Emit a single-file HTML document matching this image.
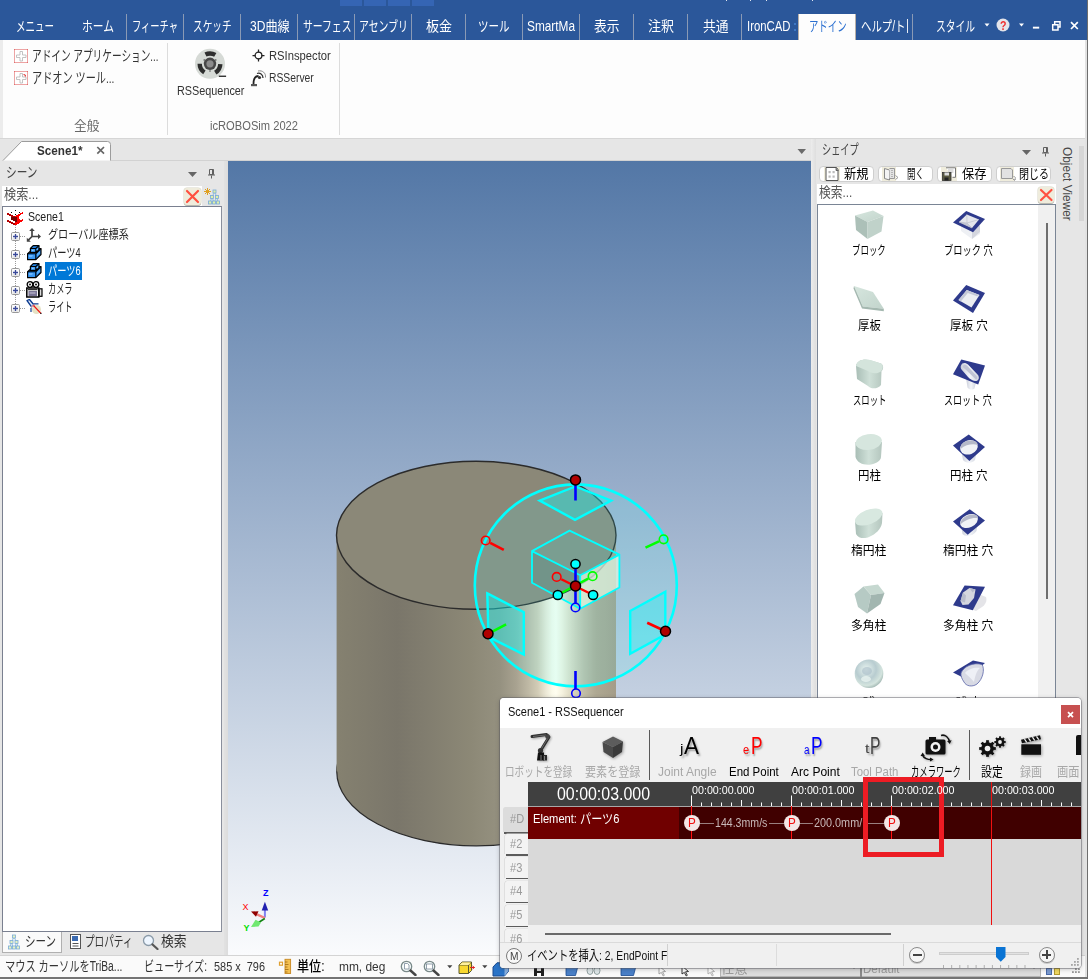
<!DOCTYPE html>
<html lang="ja"><head><meta charset="utf-8"><title>IronCAD - RSSequencer</title>
<style>
html,body{margin:0;padding:0;background:#e8e8e8;}
body{width:1088px;height:979px;overflow:hidden;font-family:"Liberation Sans","Noto Sans CJK JP",sans-serif;}
#root{position:relative;width:1088px;height:979px;overflow:hidden;background:#e8e8e8;}
#root div,#root svg{position:absolute;box-sizing:border-box;}
.t{position:absolute;white-space:pre;transform-origin:0 50%;display:block;}
#seq{left:500px;top:698px;width:581px;height:270px;background:#f0f0f0;border-radius:4px;overflow:hidden;box-shadow:0 0 0 1px rgba(90,90,100,.45),0 1px 5px rgba(0,0,0,.25);}

</style></head>
<body>
<div id="root">
<div style="left:0px;top:0px;width:1088px;height:40px;background:#2b579a;"></div>
<div style="left:340px;top:0px;width:22px;height:5.6px;background:#3565b4;"></div>
<div style="left:364px;top:0px;width:22px;height:5.6px;background:#3565b4;"></div>
<div style="left:388px;top:0px;width:22px;height:5.6px;background:#3565b4;"></div>
<div style="left:412px;top:0px;width:22px;height:5.6px;background:#3565b4;"></div>
<div style="left:126px;top:14px;width:1px;height:26px;background:#8a9ab5;"></div>
<div style="left:183px;top:14px;width:1px;height:26px;background:#8a9ab5;"></div>
<div style="left:240px;top:14px;width:1px;height:26px;background:#8a9ab5;"></div>
<div style="left:297px;top:14px;width:1px;height:26px;background:#8a9ab5;"></div>
<div style="left:354px;top:14px;width:1px;height:26px;background:#8a9ab5;"></div>
<div style="left:411px;top:14px;width:1px;height:26px;background:#8a9ab5;"></div>
<div style="left:465px;top:14px;width:1px;height:26px;background:#8a9ab5;"></div>
<div style="left:522px;top:14px;width:1px;height:26px;background:#8a9ab5;"></div>
<div style="left:579px;top:14px;width:1px;height:26px;background:#8a9ab5;"></div>
<div style="left:633px;top:14px;width:1px;height:26px;background:#8a9ab5;"></div>
<div style="left:687px;top:14px;width:1px;height:26px;background:#8a9ab5;"></div>
<div style="left:741px;top:14px;width:1px;height:26px;background:#8a9ab5;"></div>
<div style="left:912px;top:14px;width:1px;height:26px;background:#8a9ab5;"></div>
<div style="left:798px;top:14px;width:57.5px;height:27px;background:#fdfdfd;box-shadow:inset 1px 0 0 #b8b0a8, inset -1px 0 0 #b8b0a8;"></div>
<div style="left:907px;top:19px;width:1px;height:14px;background:#e8ecf4;"></div>
<div style="left:794px;top:23px;width:1.5px;height:2px;background:#3f78c4;"></div>
<div style="left:794px;top:29px;width:1.5px;height:2px;background:#3f78c4;"></div>
<div style="left:726px;top:0px;width:1px;height:1px;background:#dfe6f2;"></div>
<div style="left:750px;top:0px;width:1px;height:1px;background:#dfe6f2;"></div>
<div style="left:766px;top:0px;width:1px;height:1px;background:#dfe6f2;"></div>
<div style="left:812px;top:0px;width:1px;height:1px;background:#dfe6f2;"></div>
<svg style="left:980px;top:14px" width="108" height="24" viewBox="0 0 108 24"><path d="M4.5 9.5h5l-2.5 3z" fill="#fff"/><circle cx="23" cy="11" r="6.5" fill="#e4e4ea"/><path d="M39 9.5h5l-2.5 3z" fill="#fff"/><rect x="52.900" y="12.700" width="6.300" height="1.900" fill="#fff"/><path d="M72.700 10.700h5.300v5.300h-5.300zM74.700 10.500v-2.800h5.300v5.300h-2" fill="none" stroke="#fff" stroke-width="1.500"/><path d="M91 8.200l6.800 6.800M97.800 8.200l-6.800 6.800" stroke="#fff" stroke-width="1.700"/></svg>
<div style="left:0px;top:40px;width:1088px;height:98px;background:#fdfdfd;"></div>
<div style="left:0px;top:40px;width:3px;height:98px;background:#ececec;"></div>
<div style="left:0px;top:138px;width:1088px;height:1px;background:#d6d6d6;"></div>
<div style="left:167px;top:43px;width:1px;height:92px;background:#dcdcdc;"></div>
<div style="left:339px;top:43px;width:1px;height:92px;background:#dcdcdc;"></div>
<svg style="left:14px;top:49px" width="14" height="14" viewBox="0 0 14 14"><rect x=".5" y=".5" width="13" height="13" fill="#fff" stroke="#eda4a4"/><g fill="#e07070"><rect x="0" y="0" width="1" height="1"/><rect x="13" y="0" width="1" height="1"/><rect x="0" y="13" width="1" height="1"/><rect x="13" y="13" width="1" height="1"/></g><path d="M6 2.500h2.500v3.500h3.500v2.500h-3.500v3.500h-2.500v-3.500h-3.500v-2.500h3.500z" fill="#fff" stroke="#b4b4b4" stroke-width=".8"/></svg>
<svg style="left:14px;top:71px" width="14" height="14" viewBox="0 0 14 14"><rect x=".5" y=".5" width="13" height="13" fill="#fff" stroke="#eda4a4"/><g fill="#e07070"><rect x="0" y="0" width="1" height="1"/><rect x="13" y="0" width="1" height="1"/><rect x="0" y="13" width="1" height="1"/><rect x="13" y="13" width="1" height="1"/></g><path d="M6 2.500h2.500v3.500h3.500v2.500h-3.500v3.500h-2.500v-3.500h-3.500v-2.500h3.500z" fill="#fff" stroke="#b4b4b4" stroke-width=".8"/><path d="M9.5 3.500a2 2 0 0 1 2 2" stroke="#e03030" fill="none" stroke-width="1.200"/></svg>
<svg style="left:194px;top:48px" width="34" height="32" viewBox="0 0 34 32">
<circle cx="16" cy="15.800" r="15" fill="#d6dad6"/>
<circle cx="16" cy="15.800" r="10.300" fill="none" stroke="#2e2e2e" stroke-width="4.400" stroke-dasharray="10.200 11.370" stroke-dashoffset="-0.400"/>
<circle cx="16" cy="15.800" r="6.200" fill="#484848"/><circle cx="16" cy="15.800" r="3.600" fill="#8c8c8c"/>
<g fill="#333"><circle cx="10.200" cy="12" r=".7"/><circle cx="21.800" cy="12" r=".7"/><circle cx="16" cy="23" r=".7"/></g>
<rect x="24.800" y="27.600" width="7.300" height="1.300" fill="#222"/>
</svg>
<svg style="left:251px;top:48px" width="15" height="15" viewBox="0 0 15 15">
<circle cx="7.500" cy="7.500" r="3.400" fill="none" stroke="#222" stroke-width="1.300"/>
<path d="M7.500 1.500v3M7.500 10.500v3M1.500 7.500h3M10.500 7.500h3" stroke="#222" stroke-width="1.250"/></svg>
<svg style="left:250px;top:70px" width="16" height="17" viewBox="0 0 16 17">
<path d="M3.500 14c0-5 1.500-8 5-8" fill="none" stroke="#222" stroke-width="1.800"/>
<path d="M7 3.500c3-1 6 1 6 4.500" fill="none" stroke="#333" stroke-width="1.300"/>
<path d="M8 1c4.500-1 8 2 7.500 6.500" fill="none" stroke="#888" stroke-width="1"/>
<circle cx="9.500" cy="7.500" r="1.600" fill="#333"/>
<rect x="1" y="14" width="6" height="2.200" fill="#555"/></svg>
<div style="left:0px;top:139px;width:1088px;height:22px;background:#e6e6e6;"></div>
<div style="left:110px;top:160px;width:701px;height:1px;background:#d2d2d2;"></div>
<svg style="left:0;top:139px" width="116" height="23" viewBox="0 0 116 23">
<path d="M3 21.500L21.500 2.500H107.500Q110.500 2.500 110.500 5.500V21.500" fill="#fff" stroke="#9c9c9c" stroke-width="1"/>
<path d="M97.300 8l6.700 6.700M104 8l-6.700 6.700" stroke="#666" stroke-width="1.700"/>
</svg>
<svg style="left:796px;top:147px" width="12" height="8"><path d="M1.500 2h8.500l-4.250 5z" fill="#6a6a6a"/></svg>
<div style="left:0px;top:161px;width:228px;height:794px;background:#e6e6e6;"></div>
<div style="left:224px;top:161px;width:4px;height:794px;background:linear-gradient(90deg,#e2e2e2,#dcdcdc);"></div>
<svg style="left:186px;top:168px" width="32" height="12"><path d="M2 4h9l-4.500 5z" fill="#666"/><path d="M23.500 1.500h4v5h-4zM22 7h7M25.500 7.500v3" fill="none" stroke="#606060" stroke-width="1"/><rect x="26" y="1.500" width="1.500" height="5" fill="#606060"/></svg>
<div style="left:2px;top:186px;width:200px;height:20px;background:#fff;"></div>
<div style="left:183.5px;top:187.5px;width:17px;height:17px;background:#efecdc;border-radius:3px;box-shadow:0 1px 0 #b8b8b0, 0 0 0 .5px #d8d6c8;"></div><svg style="left:183.5px;top:187.5px" width="17" height="17" viewBox="0 0 17 17"><path d="M3 3L14 14M14 3L3 14" stroke="#ff5040" stroke-width="2.200" stroke-linecap="round"/></svg>
<svg style="left:203px;top:187px" width="18" height="18" viewBox="0 0 18 18">
<path d="M4.500 1v7M1 4.500h7M2 2l5 5M7 2l-5 5" stroke="#e0a020" stroke-width="1"/>
<path d="M11.500 5L9 10M11.500 5l2.500 5M9 10l-2 5.500M9 10l2 5.500M14 10l1 5.500M14 10l-3 5.500" stroke="#8ab8e0" stroke-width=".9" fill="none"/>
<g fill="#dff0a8" stroke="#78aad8" stroke-width=".8"><rect x="10" y="3" width="3" height="3"/><rect x="7.500" y="8.500" width="3" height="3"/><rect x="12.500" y="8.500" width="3" height="3"/><rect x="5.500" y="14" width="3" height="3"/><rect x="9.500" y="14" width="3" height="3"/><rect x="13.500" y="14" width="3" height="3"/></g></svg>
<div style="left:2px;top:206px;width:220px;height:726px;background:#fff;border:1px solid #7a8090;border-right-color:#8a8f9c;border-bottom-color:#7a8090;"></div>
<div style="left:45px;top:262px;width:37px;height:18px;background:#0078d7;"></div>
<svg style="left:0;top:206px" width="46" height="112" viewBox="0 0 46 112"><path d="M15.500 19V102" stroke="#9a9a9a" stroke-width="1" stroke-dasharray="1 1"/><path d="M20 30.5H26" stroke="#9a9a9a" stroke-dasharray="1 1"/><rect x="11.500" y="26.5" width="8" height="8" rx="1.200" fill="#fcfcfc" stroke="#999"/><rect x="12.500" y="32.0" width="6" height="2" fill="#e8e8e8"/><path d="M13 30.5h5M15.500 28.0v5" stroke="#3a4a9a" stroke-width="1.300"/><path d="M20 48.5H26" stroke="#9a9a9a" stroke-dasharray="1 1"/><rect x="11.500" y="44.5" width="8" height="8" rx="1.200" fill="#fcfcfc" stroke="#999"/><rect x="12.500" y="50.0" width="6" height="2" fill="#e8e8e8"/><path d="M13 48.5h5M15.500 46.0v5" stroke="#3a4a9a" stroke-width="1.300"/><path d="M20 66.5H26" stroke="#9a9a9a" stroke-dasharray="1 1"/><rect x="11.500" y="62.5" width="8" height="8" rx="1.200" fill="#fcfcfc" stroke="#999"/><rect x="12.500" y="68.0" width="6" height="2" fill="#e8e8e8"/><path d="M13 66.5h5M15.500 64.0v5" stroke="#3a4a9a" stroke-width="1.300"/><path d="M20 84.5H26" stroke="#9a9a9a" stroke-dasharray="1 1"/><rect x="11.500" y="80.5" width="8" height="8" rx="1.200" fill="#fcfcfc" stroke="#999"/><rect x="12.500" y="86.0" width="6" height="2" fill="#e8e8e8"/><path d="M13 84.5h5M15.500 82.0v5" stroke="#3a4a9a" stroke-width="1.300"/><path d="M20 102.5H26" stroke="#9a9a9a" stroke-dasharray="1 1"/><rect x="11.500" y="98.5" width="8" height="8" rx="1.200" fill="#fcfcfc" stroke="#999"/><rect x="12.500" y="104.0" width="6" height="2" fill="#e8e8e8"/><path d="M13 102.5h5M15.500 100.0v5" stroke="#3a4a9a" stroke-width="1.300"/></svg>
<svg style="left:4px;top:207px" width="20" height="18" viewBox="0 0 20 18" shape-rendering="crispEdges"><rect x="11" y="3" width="1" height="1" fill="#000"/><rect x="7" y="5" width="1" height="1" fill="#000"/><rect x="15" y="5" width="1" height="1" fill="#000"/><rect x="18" y="5" width="1" height="1" fill="#ff0000"/><rect x="3" y="6" width="2" height="1" fill="#b40000"/><rect x="16" y="6" width="3" height="1" fill="#ff0000"/><rect x="3" y="7" width="4" height="1" fill="#b40000"/><rect x="11" y="7" width="1" height="1" fill="#000"/><rect x="14" y="7" width="3" height="1" fill="#ff0000"/><rect x="5" y="8" width="4" height="1" fill="#b40000"/><rect x="12" y="8" width="4" height="1" fill="#ff0000"/><rect x="7" y="9" width="4" height="1" fill="#b40000"/><rect x="11" y="9" width="4" height="1" fill="#ff0000"/><rect x="7" y="10" width="6" height="1" fill="#720000"/><rect x="13" y="10" width="2" height="1" fill="#ff0000"/><rect x="7" y="11" width="6" height="1" fill="#720000"/><rect x="13" y="11" width="2" height="1" fill="#ff0000"/><rect x="7" y="12" width="6" height="1" fill="#720000"/><rect x="13" y="12" width="3" height="1" fill="#ff0000"/><rect x="18" y="12" width="1" height="1" fill="#ff0000"/><rect x="3" y="13" width="2" height="1" fill="#b40000"/><rect x="9" y="13" width="4" height="1" fill="#720000"/><rect x="13" y="13" width="6" height="1" fill="#ff0000"/><rect x="3" y="14" width="4" height="1" fill="#b40000"/><rect x="11" y="14" width="2" height="1" fill="#720000"/><rect x="13" y="14" width="5" height="1" fill="#ff0000"/><rect x="5" y="15" width="4" height="1" fill="#b40000"/><rect x="11" y="15" width="5" height="1" fill="#ff0000"/><rect x="7" y="16" width="4" height="1" fill="#b40000"/><rect x="11" y="16" width="4" height="1" fill="#ff0000"/><rect x="9" y="17" width="2" height="1" fill="#b40000"/><rect x="11" y="17" width="2" height="1" fill="#ff0000"/></svg>
<svg style="left:26px;top:227px" width="16" height="16" viewBox="0 0 16 16">
<path d="M6 9.500V2.500M6 9.500H13.500M6 9.500L1.800 13.700" stroke="#444" stroke-width="1.700" fill="none"/>
<path d="M3.200 4L6 1l2.800 3zM12 6.700l3 2.800-3 2.800zM.8 10.800v4h4z" fill="#444"/></svg>
<svg style="left:27px;top:244.5px" width="15" height="16" viewBox="0 0 15 16">
<path d="M.6 8.800L3.400 6.300V3.500L6.200.6H12V3.700L14 3.500V9.500L8.800 14.700H.6Z" fill="#2384e6" stroke="#000" stroke-width="1.200" stroke-linejoin="round"/>
<path d="M.6 8.800H8.800V14.700M8.800 8.800L14 3.500M3.400 6.300V7.400H8.800L12 3.700M3.400 3.500H8.800V7.400M8.800 3.500L12 .6" fill="none" stroke="#000" stroke-width="1.100"/>
<path d="M1.400 9.800h6.600v4H1.400z" fill="#3d98f2"/><path d="M2 10.300h4l-1 1.500H2z" fill="#7cc0ff"/><path d="M4.300 4.400h3.700v2.200H4.300z" fill="#4aa2f4"/><path d="M5 4.700h2l-.8 1.200H5z" fill="#8ccaff"/>
<path d="M10 9l3-3v2.500l-3 3z" fill="#5aaef8"/><path d="M9.800 4.200l1.400-1.500v1.800l-1.400 1.500z" fill="#6cb8fa"/>
</svg>
<svg style="left:27px;top:262.5px" width="15" height="16" viewBox="0 0 15 16">
<path d="M.6 8.800L3.400 6.300V3.500L6.200.6H12V3.700L14 3.500V9.500L8.800 14.700H.6Z" fill="#2384e6" stroke="#000" stroke-width="1.200" stroke-linejoin="round"/>
<path d="M.6 8.800H8.800V14.700M8.800 8.800L14 3.500M3.400 6.300V7.400H8.800L12 3.700M3.400 3.500H8.800V7.400M8.800 3.500L12 .6" fill="none" stroke="#000" stroke-width="1.100"/>
<path d="M1.400 9.800h6.600v4H1.400z" fill="#3d98f2"/><path d="M2 10.300h4l-1 1.500H2z" fill="#7cc0ff"/><path d="M4.300 4.400h3.700v2.200H4.300z" fill="#4aa2f4"/><path d="M5 4.700h2l-.8 1.200H5z" fill="#8ccaff"/>
<path d="M10 9l3-3v2.500l-3 3z" fill="#5aaef8"/><path d="M9.800 4.200l1.400-1.500v1.800l-1.400 1.500z" fill="#6cb8fa"/>
</svg>
<svg style="left:26px;top:280.5px" width="17" height="17" viewBox="0 0 17 17">
<circle cx="4" cy="3.500" r="2.800" fill="#fff" stroke="#000" stroke-width="1.300"/><circle cx="10" cy="3.500" r="2.800" fill="#fff" stroke="#000" stroke-width="1.300"/>
<circle cx="4" cy="3.500" r="1.100" fill="#222"/><circle cx="10" cy="3.500" r="1.100" fill="#222"/>
<rect x=".8" y="7" width="12" height="9" fill="#f4f4f4" stroke="#000" stroke-width="1.500"/>
<rect x="2.500" y="10" width="8.500" height="5" fill="#7a7494"/><path d="M3.500 12h6" stroke="#c8c4d8" stroke-width="1"/><path d="M2 8.700h9.500" stroke="#000" stroke-width="1"/>
<rect x="13.200" y="7.800" width="2.800" height="7.500" fill="#ddd" stroke="#000" stroke-width="1.200"/>
</svg>
<svg style="left:26px;top:298.5px" width="16" height="16" viewBox="0 0 16 16">
<circle cx="10.500" cy="10.500" r="4.500" fill="#e6e2c4"/>
<path d="M1 1.500l2.500-1 4.500 5.500-2.500 1.800z" fill="#dfe8f8" stroke="#0a3a90" stroke-width="1.300" stroke-linejoin="round"/>
<path d="M5 9V13M7.500 4.800h5" stroke="#0a3a90" stroke-width="1.200"/>
<path d="M5.500 8l3-2.500" stroke="#f0a0a0" stroke-width="1.300"/>
<path d="M7.500 6.500L15 14.500" stroke="#f01010" stroke-width="1.100"/><rect x="14.300" y="13.800" width="1.200" height="1.200" fill="#111"/>
</svg>
<div style="left:2px;top:932px;width:60px;height:21px;background:#fafafa;border:1px solid #b0b0b0;border-top:none;"></div>
<svg style="left:8px;top:934px" width="12" height="16" viewBox="0 0 12 16">
<path d="M6 3L3.500 8M6 3l2.500 5M3.500 8l-1.500 5M3.500 8l1.500 5M8.500 8l-1.500 5M8.500 8l1.500 5" stroke="#8ab8e0" stroke-width=".9" fill="none"/>
<g fill="#e4f2c4" stroke="#7aacd8" stroke-width=".8"><rect x="4.500" y="1" width="3" height="3"/><rect x="2" y="6.500" width="3" height="3"/><rect x="7" y="6.500" width="3" height="3"/><rect x=".5" y="12" width="3" height="3"/><rect x="4.500" y="12" width="3" height="3"/><rect x="8.500" y="12" width="3" height="3"/></g></svg>
<svg style="left:70px;top:934px" width="11" height="15" viewBox="0 0 11 15">
<rect x=".5" y=".5" width="10" height="14" fill="#fff" stroke="#555"/><rect x="2" y="2" width="6" height="5" fill="#3a6ab0"/>
<path d="M2.500 9.500h6M2.500 12h6" stroke="#555" stroke-width="1"/></svg>
<svg style="left:142px;top:934px" width="17" height="16" viewBox="0 0 17 16">
<circle cx="6.500" cy="6.500" r="5" fill="#eef6ff" stroke="#8a9aa8" stroke-width="1.300"/><path d="M10.500 10.500l5 4.500" stroke="#555" stroke-width="2.200" stroke-linecap="round"/></svg>
<svg style="left:228px;top:161px" width="583" height="794" viewBox="228 161 583 794">
<defs>
<linearGradient id="sky" x1="0" y1="161" x2="0" y2="955" gradientUnits="userSpaceOnUse"><stop offset="0" stop-color="#5377a6"/><stop offset="1" stop-color="#fafbfd"/></linearGradient>
<linearGradient id="cyl" x1="337" y1="0" x2="616" y2="0" gradientUnits="userSpaceOnUse"><stop offset="0.000" stop-color="#858170"/><stop offset="0.215" stop-color="#7a766a"/><stop offset="0.477" stop-color="#8c8876"/><stop offset="0.584" stop-color="#959180"/><stop offset="0.642" stop-color="#a8a290"/><stop offset="0.685" stop-color="#beb8a4"/><stop offset="0.720" stop-color="#d2ccb6"/><stop offset="0.749" stop-color="#ece8d6"/><stop offset="0.771" stop-color="#fbfaea"/><stop offset="0.785" stop-color="#fffef0"/><stop offset="0.806" stop-color="#f6f3e0"/><stop offset="0.828" stop-color="#e6e2cc"/><stop offset="0.857" stop-color="#d2ceb8"/><stop offset="0.885" stop-color="#c0bca6"/><stop offset="0.928" stop-color="#aea892"/><stop offset="1.000" stop-color="#a49c88"/></linearGradient>
<clipPath id="sph"><circle cx="575.800" cy="585.400" r="100"/></clipPath>
</defs>
<rect x="228" y="161" width="583" height="794" fill="url(#sky)"/>
<!-- cylinder side -->
<ellipse cx="476.250" cy="771.500" rx="139.500" ry="74.300" fill="url(#cyl)" stroke="#2a2a2a" stroke-width="1.200"/>
<rect x="336.600" y="535" width="279.400" height="236.500" fill="url(#cyl)"/>
<!-- top face -->
<ellipse cx="476.250" cy="535.300" rx="139.750" ry="74" fill="#8b8878" stroke="#2b2b2b" stroke-width="1.400"/>
<!-- triball sphere -->
<circle cx="575.800" cy="585.400" r="101" fill="rgba(80,255,255,.14)" stroke="#00ffff" stroke-width="2.600"/>
<!-- planes -->
<g fill="rgba(0,255,255,.32)" stroke="#00ffff" stroke-width="2.400" stroke-linejoin="miter">
<path d="M539.700 500.600L575.300 486.500L611.200 500.600L575 519.800Z"/>
<path d="M487.300 593.400L523.800 612.200V654.500L488.500 636.900Z"/>
<path d="M630.200 611L665.300 591.800V634.500L630.200 653.800Z"/>
</g>
<!-- cube -->
<path d="M580.200 575.300L619.400 554.600V587.500L580.200 608.700Z" fill="rgba(225,245,225,.72)"/>
<path d="M532 551.100L569.600 530.600L619.400 554.600L580.200 575.300Z" fill="rgba(0,255,255,.06)"/>
<path d="M532 551.100L580.200 575.300V608.700L532 582.800Z" fill="rgba(0,120,120,.12)"/>
<path d="M532 551.100L569.600 530.600L619.400 554.600V587.500L580.200 608.700L532 582.800ZM532 551.100L580.200 575.300L619.400 554.600M580.200 575.300V608.700" fill="none" stroke="#00ffff" stroke-width="1.800" stroke-linejoin="round"/>
<!-- outer handles -->
<path d="M575.500 485V500.600M575.500 671V689" stroke="#0000ff" stroke-width="2.600"/>
<path d="M490.200 542.850L503.800 549.900M665.500 631.200L647.200 622.800" stroke="#ff0000" stroke-width="2.600"/>
<path d="M658.960 541.430L645.500 547.600M488 633.800L506.100 624.400" stroke="#00ff00" stroke-width="2.600"/>
<circle cx="485.700" cy="540.500" r="4.300" fill="none" stroke="#ff0000" stroke-width="1.600"/>
<circle cx="663.600" cy="539.300" r="4.300" fill="none" stroke="#00ff00" stroke-width="1.600"/>
<circle cx="576" cy="693.300" r="4.300" fill="none" stroke="#0000ff" stroke-width="1.600"/>
<g fill="#b00000" stroke="#000" stroke-width="1.500"><circle cx="575.500" cy="479.900" r="5"/><circle cx="488" cy="633.800" r="5"/><circle cx="665.500" cy="631.200" r="5"/></g>
<!-- center handles -->
<path d="M575.500 564V603" stroke="#0000ff" stroke-width="2.600"/>
<path d="M561.300 579.200L593.100 595" stroke="#ff0000" stroke-width="2.400"/>
<path d="M588.100 578.600L557.800 595" stroke="#00ff00" stroke-width="2.400"/>
<circle cx="556.700" cy="576.900" r="4.300" fill="none" stroke="#ff0000" stroke-width="1.600"/>
<circle cx="592.600" cy="576.200" r="4.300" fill="none" stroke="#00ff00" stroke-width="1.600"/>
<circle cx="575.500" cy="607.500" r="4.300" fill="none" stroke="#0000ff" stroke-width="1.600"/>
<g fill="#00ffff" stroke="#000" stroke-width="1.500"><circle cx="575.500" cy="564" r="4.600"/><circle cx="557.800" cy="595" r="4.600"/><circle cx="593.100" cy="595" r="4.600"/></g>
<circle cx="575.500" cy="585.900" r="5" fill="#b00000" stroke="#000" stroke-width="1.500"/>
<!-- axis triad -->
<path d="M264.900 917.500V909" stroke="#8080f0" stroke-width="2"/><path d="M261.700 910.500L264.900 901.800L268.200 910.500Z" fill="#2020b0"/>
<path d="M264.800 918L257 914.300" stroke="#f08080" stroke-width="2.400"/><path d="M251 911.600L258.500 911.200L256 916.800Z" fill="#900000"/>
<path d="M264.800 918.500L257 923.500" stroke="#108010" stroke-width="1.600"/><path d="M251 926.900L255.500 919.800L261 922.500L258.500 926.500Z" fill="#70e870"/>
<text x="263" y="895.800" font-family="Liberation Sans,sans-serif" font-size="9" font-weight="700" fill="#0000ff">Z</text>
<text x="242.500" y="909.800" font-family="Liberation Sans,sans-serif" font-size="9" fill="#ff0000">X</text>
<text x="243.500" y="931" font-family="Liberation Sans,sans-serif" font-size="9" font-weight="700" fill="#00e000">Y</text>
</svg>
<div style="left:811px;top:139px;width:5px;height:816px;background:linear-gradient(90deg,#ececec,#dedede);"></div>
<div style="left:816px;top:139px;width:272px;height:816px;background:#e6e6e6;"></div>
<svg style="left:1020px;top:146px" width="32" height="12"><path d="M2 4h9l-4.500 5z" fill="#666"/><path d="M23.500 1.500h4v5h-4zM22 7h7M25.500 7.500v3" fill="none" stroke="#606060" stroke-width="1"/><rect x="26" y="1.500" width="1.500" height="5" fill="#606060"/></svg>
<div style="left:818.8px;top:166px;width:55.60000000000002px;height:16px;background:#fff;border:1px solid #cfcfcf;border-radius:4px;"></div>
<div style="left:878px;top:166px;width:55.299999999999955px;height:16px;background:#fff;border:1px solid #cfcfcf;border-radius:4px;"></div>
<div style="left:936.7px;top:166px;width:55.299999999999955px;height:16px;background:#fff;border:1px solid #cfcfcf;border-radius:4px;"></div>
<div style="left:995.9px;top:166px;width:55.30000000000007px;height:16px;background:#fff;border:1px solid #cfcfcf;border-radius:4px;"></div>
<svg style="left:824px;top:167px" width="16" height="14" viewBox="0 0 16 14">
<rect x="0" y="0" width="16" height="14" fill="#efecdc"/><path d="M2 .5h10.500l1.500 2v11h-12z" fill="#fff" stroke="#555"/><path d="M12 .5v3h2.500" fill="#888" stroke="#555" stroke-width=".8"/>
<g fill="#bbb"><rect x="4.500" y="4" width="2.200" height="2.200"/><rect x="8.500" y="4" width="2.200" height="2.200"/><rect x="4.500" y="8.500" width="2.200" height="2.200"/><rect x="8.500" y="8.500" width="2.200" height="2.200"/></g></svg>
<svg style="left:882px;top:167px" width="18" height="14" viewBox="0 0 18 14">
<rect x="0" y="0" width="14" height="14" fill="#efecdc"/><path d="M2.500 1.500l5 1.500v10l-5-1.500z" fill="#f4f4f4" stroke="#888"/><path d="M7.500 1.500h5v10h-5" fill="#e4e4e4" stroke="#999"/><path d="M10 3v7" stroke="#888" stroke-dasharray="1 1"/>
<path d="M13.500 8.500l2.500 2-2.500 2" fill="none" stroke="#999" stroke-width="1"/></svg>
<svg style="left:941px;top:167px" width="16" height="14" viewBox="0 0 16 14">
<rect x="0" y="0" width="16" height="14" fill="#efecdc"/><path d="M5 .8h9.500v9.500h-3" fill="#fff" stroke="#777"/><path d="M7 3h5.500M7 5h5.500" stroke="#aaa" stroke-width=".8"/>
<rect x="1.500" y="5.500" width="8.500" height="8" fill="#5a5a40" stroke="#333" stroke-width=".8"/><rect x="3.500" y="5.500" width="4.500" height="3" fill="#ddd"/><rect x="3.500" y="10.500" width="4" height="3" fill="#222"/></svg>
<svg style="left:1000px;top:167px" width="18" height="14" viewBox="0 0 18 14">
<rect x="0" y="0" width="14" height="14" fill="#efecdc"/><path d="M1.500 1.500h9.500l1.500 1.500v8.500h-11z" fill="#e2e2e2" stroke="#999"/>
<path d="M13.500 9.500c2 0 2.500 1.500 1 3.500m-1.500-1l1.500 1.500 1-1.500" fill="none" stroke="#999" stroke-width="1"/></svg>
<div style="left:817px;top:184px;width:239px;height:20px;background:#fff;"></div>
<div style="left:1037.5px;top:186.5px;width:16.5px;height:16px;background:#efecdc;border-radius:3px;box-shadow:0 1px 0 #b8b8b0, 0 0 0 .5px #d8d6c8;"></div><svg style="left:1037.5px;top:186.5px" width="16.5" height="16" viewBox="0 0 16.5 16"><path d="M3 3L13.5 13M13.5 3L3 13" stroke="#ff5040" stroke-width="2.200" stroke-linecap="round"/></svg>
<div style="left:817px;top:204px;width:239px;height:751px;background:#fff;border:1px solid #7a8595;border-bottom:none;"></div>
<div style="left:1038px;top:205px;width:17px;height:750px;background:#f0f0f0;"></div>
<div style="left:1045.5px;top:223px;width:2px;height:376px;background:#6e6e6e;"></div>
<div style="left:1056px;top:139px;width:32px;height:816px;background:#e6e6e6;"></div>
<div style="left:1079px;top:146px;width:5px;height:75px;background:#d6d6d6;"></div>
<div style="left:1057px;top:147px;width:20px;height:74px;"><span style="position:absolute;left:0;top:0;white-space:pre;font-family:Liberation Sans,sans-serif;font-size:13px;line-height:20px;color:#484848;transform-origin:0 0;transform:translate(20px,0) rotate(90deg) scaleX(.915);display:block;">Object Viewer</span></div>
<svg style="left:0;top:0" width="0" height="0"><defs><linearGradient id="gA" x1="0" y1="0" x2="1" y2="0"><stop offset="0" stop-color="#a9beb6"/><stop offset=".5" stop-color="#cfe0d8"/><stop offset="1" stop-color="#b4c6be"/></linearGradient>
<linearGradient id="gT" x1="0" y1="0" x2="1" y2="1"><stop offset="0" stop-color="#d6e6de"/><stop offset="1" stop-color="#c2d4cc"/></linearGradient>
<linearGradient id="gH" x1="0" y1="0" x2="1" y2="0"><stop offset="0" stop-color="#c8ccd8"/><stop offset=".5" stop-color="#f4f6fa"/><stop offset="1" stop-color="#d0d4de"/></linearGradient>
<radialGradient id="gS" cx=".4" cy=".35" r=".7"><stop offset="0" stop-color="#e8f4f0"/><stop offset=".5" stop-color="#b8ccd0"/><stop offset=".8" stop-color="#d4e4de"/><stop offset="1" stop-color="#9ab0ac"/></radialGradient></defs></svg>
<svg style="left:854px;top:209px" width="31" height="31" viewBox="0 0 31 31"><path d="M1 6.500L19 1.500L29.500 7L13.500 13Z" fill="url(#gT)"/><path d="M1 6.500L13.500 13V30L2 21Z" fill="#acc0b8"/><path d="M13.500 13L29.500 7L27.500 22.500L13.500 30Z" fill="#c0d2ca"/></svg>
<svg style="left:952px;top:209px" width="34" height="31" viewBox="0 0 34 31"><path d="M9 14l19 4v7l-8 5-11-8z" fill="#eef0f4"/><path d="M20 30v-9l8-5v7z" fill="#d4d6de"/><path d="M1 13.500L14.200 2L33 10L21 23.300Z" fill="#2e3a8c"/><path d="M7 13L14.800 5.500L27 10.500L20 19Z" fill="#e4e6ec"/><path d="M7 13l8 1 5 5zM14.800 5.500l.2 8.500M27 10.500l-12 3.500" fill="#c4c8d4" stroke="#b8bcc8" stroke-width=".6"/></svg>
<svg style="left:853px;top:284px" width="32" height="29" viewBox="0 0 32 29"><path d="M1 2L20 8L30.800 24.800L9.800 22.500Z" fill="url(#gT)"/><path d="M1 2L9.800 22.500L30.800 24.800V27.300L9 24.500L.5 4.500Z" fill="#a4b8b0"/></svg>
<svg style="left:952px;top:284px" width="34" height="31" viewBox="0 0 34 31"><path d="M1 16.600L14.200 1L33 9L21 29Z" fill="#2e3a8c"/><path d="M6.500 16L14.800 6L27.500 11L19.500 23.500Z" fill="#eceef2"/><path d="M6.500 16L14.800 6l1 3-7 8.500zM14.800 6L27.500 11l-2.500 1.200-9.200-3.200z" fill="#c4c8d6"/></svg>
<svg style="left:854px;top:358px" width="31" height="32" viewBox="0 0 31 32"><path d="M2 8C3 2 10 0.500 16 2L27 5.500C30 7 29.500 12 27.500 13L27 27C24 31 17 31.500 14 28L3 21Z" fill="url(#gA)"/><path d="M2 8C3 2 10 .5 16 2L27 5.500C30 7.500 29 12 26 14C22 16.500 16 15 14 13Z" fill="#d4e4dc"/></svg>
<svg style="left:952px;top:358px" width="34" height="32" viewBox="0 0 34 32"><path d="M14 20l10 4-1.500 6.500c-2 2-6 1-7-1z" fill="url(#gH)"/><path d="M1 16.300L9.300 1.600L33 7.400L26.200 26.600Z" fill="#2e3a8c"/><path d="M9 7.500C10 4 14 4.500 16 6.500L26 17C28 20 26.500 23.500 23 23C20 22.500 18 21 16 19L9.500 11.500C8.500 10 8.500 8.500 9 7.500Z" fill="url(#gH)"/><path d="M11 8C12 6 14.500 6.800 16 8.500L24.500 18c1 1.500 1 3-.5 3.500L13 11C11.500 10 10.500 9 11 8z" fill="#c0c4d4"/></svg>
<svg style="left:854px;top:433px" width="30" height="33" viewBox="0 0 30 33"><path d="M1.500 9V24C3 30 10 32.500 17 31.500C23 30.500 27 27 27 24L28 9Z" fill="url(#gA)"/><ellipse cx="14.700" cy="9" rx="13.300" ry="7.800" fill="#d6e6de" transform="rotate(-8 14.700 9)"/></svg>
<svg style="left:952px;top:433px" width="34" height="32" viewBox="0 0 34 32"><path d="M9 16l16 1-2 10c-3 3.500-9 3.500-12 0z" fill="url(#gH)"/><path d="M1 12.600L16.700 1.600L33 14L17.400 28Z" fill="#2e3a8c"/><ellipse cx="17" cy="14.300" rx="9" ry="7" fill="#f0f2f6" transform="rotate(-20 17 14.300)"/><path d="M8.500 16C8 10 14 7 20 7.500C24 8 26 10 25.500 12C22 10.500 14 11 8.500 16Z" fill="#b4b8c8"/></svg>
<svg style="left:853px;top:507px" width="31" height="33" viewBox="0 0 31 33"><path d="M2 14L3 27C5 31.500 12 32 16 30C23 27 28 22 29 16L29.500 6Z" fill="url(#gA)"/><ellipse cx="15.700" cy="10" rx="14.500" ry="7.200" fill="#d8e8e0" transform="rotate(-22 15.700 10)"/></svg>
<svg style="left:952px;top:507px" width="34" height="32" viewBox="0 0 34 32"><path d="M9 17l17-3-1.500 10c-3 5-11 6.500-14 3z" fill="url(#gH)"/><path d="M1 14.500L17.700 2.200L33 13.400L15.700 27.700Z" fill="#2e3a8c"/><ellipse cx="17" cy="14" rx="9.500" ry="6.300" fill="#f0f2f6" transform="rotate(-25 17 14)"/><path d="M8.500 17.500C8 12 15 7 22 7.500C25 8 26.500 9.500 26 11.500C22 10 13 12.500 8.500 17.500Z" fill="#b4b8c8"/></svg>
<svg style="left:853px;top:583px" width="33" height="32" viewBox="0 0 33 32"><path d="M1.500 11L9 3L24 1.500L31.500 10L23 16L10 16.500Z" fill="#d2e2da" opacity="0"/><path d="M1.500 11L10.500 3.500L18 12L14 30.500L5 24Z" fill="#b6cac4"/><path d="M10.500 3.500L25 1.500L31.500 10L18 12Z" fill="#c6d8d0"/><path d="M18 12L31.500 10L27.500 21L14 30.500Z" fill="#a2b6b0"/></svg>
<svg style="left:952px;top:583px" width="36" height="33" viewBox="0 0 36 33"><path d="M14 24l10-14 10 4c1.500 4-1 8-4 10l-6 4z" fill="#e4e4e8"/><path d="M1 22.200L12.600 2.400L33 3.800L20.800 27.300Z" fill="#2e3a8c"/><path d="M8.500 18L11 9.500L17.500 5L23.500 6.500L22 15L16.500 21.500L10.500 22Z" fill="#d4d6de"/><path d="M8.500 18L11 9.500l3 3-1 7zM17.500 5l6 1.500-3 3z" fill="#b8bccb"/></svg>
<svg style="left:854px;top:659px" width="30" height="30" viewBox="0 0 30 30"><circle cx="15" cy="14.700" r="14.300" fill="url(#gS)"/><ellipse cx="13" cy="12" rx="5" ry="4" fill="#a8bcc8" opacity=".6"/><ellipse cx="12" cy="20" rx="5" ry="3" fill="#eef8f4" opacity=".7"/></svg>
<svg style="left:952px;top:659px" width="34" height="30" viewBox="0 0 34 30"><path d="M1 13.500L21 1.500L33 4L14 20Z" fill="#2e3a8c"/><path d="M9 14C12 7 22 3 30 5.500C33 10 31 20 25 25C20 28.500 14 27 12 23C10 20 8.500 17 9 14Z" fill="#d8dae4" stroke="#5a64a8" stroke-width=".8"/><path d="M13 14c3-4 10-6 15-5-3 2-5 8-6 14-3-4-7-7-9-9z" fill="#eef0f6"/></svg>
<div style="left:0px;top:955px;width:1088px;height:22px;background:#fafafa;border-top:1px solid #d4d4d4;"></div>
<div style="left:0px;top:977px;width:1088px;height:2px;background:#747474;"></div>
<svg style="left:278px;top:958px" width="16" height="17" viewBox="0 0 16 17">
<rect x="1.500" y="4.200" width="3" height="3" fill="#fff" stroke="#e0a030" stroke-width="1.200"/>
<rect x="7" y="1.300" width="5.600" height="14.200" fill="#f4c050" stroke="#c88820" stroke-width=".9"/>
<path d="M7 4h2.500M7 6.500h3.500M7 9h2.500M7 11.500h3.500M7 14h2.500" stroke="#a06810" stroke-width=".8"/></svg>
<svg style="left:400px;top:960px" width="17" height="16" viewBox="0 0 17 16">
<circle cx="6.500" cy="6.500" r="5.200" fill="#f4fafa" stroke="#7a8a8a" stroke-width="1.300"/><path d="M4.500 3.500h3l1.500 1.500v4h-4.500z" fill="#fff" stroke="#7a8a9a" stroke-width=".8"/>
<path d="M10.500 10.500l5 4.500" stroke="#444" stroke-width="2.400" stroke-linecap="round"/></svg>
<svg style="left:423px;top:960px" width="17" height="16" viewBox="0 0 17 16">
<circle cx="6.500" cy="6.500" r="5.200" fill="#f4fafa" stroke="#7a8a8a" stroke-width="1.300"/><rect x="3.500" y="4" width="6" height="5" fill="#fff" stroke="#7a8a9a" stroke-width=".8"/>
<path d="M10.500 10.500l5 4.500" stroke="#444" stroke-width="2.400" stroke-linecap="round"/></svg>
<svg style="left:446px;top:964px" width="8" height="6"><path d="M1.200 1.200h5.200l-2.600 3z" fill="#444"/></svg>
<svg style="left:481px;top:964px" width="8" height="6"><path d="M1.200 1.200h5.200l-2.600 3z" fill="#444"/></svg>
<svg style="left:458px;top:961px" width="17" height="14" viewBox="0 0 17 14">
<path d="M1 4L4 1h9.500v8.500L10.500 12.500H1z" fill="#f8d830" stroke="#5a5a30" stroke-width="1" stroke-linejoin="round"/>
<path d="M1 4h9.500v8.500M10.500 4L13.500 1" fill="none" stroke="#5a5a30" stroke-width="1"/><path d="M1.500 4L4 1.500h9L10.500 4z" fill="#fdf0a0"/>
<path d="M12 6.500h4.500M14.500 5l2 1.500-2 1.500" stroke="#e02020" stroke-width="1" fill="none"/></svg>
<svg style="left:492px;top:962px" width="18" height="15" viewBox="0 0 18 15">
<path d="M1 5L5 .8h11.500v8.500L12.500 14H1z" fill="#2a74c8" stroke="#1a4a90" stroke-width="1" stroke-linejoin="round"/>
<path d="M12.500 5.500L16.500 1v8L12.500 14z" fill="#88b0e0"/></svg>
<svg style="left:564.5px;top:966px" width="14" height="11" viewBox="0 0 14 11"><path d="M1 0h12l-2.500 9.500H1z" fill="#4a80c8" stroke="#1a4a90" stroke-width=".8"/></svg>
<svg style="left:619.5px;top:966px" width="17" height="11" viewBox="0 0 17 11"><path d="M1 0h15l-2.500 9.500H1z" fill="#4a80c8" stroke="#1a4a90" stroke-width=".8"/></svg>
<div style="left:534px;top:968px;width:10px;height:8px;background:#222;"></div>
<div style="left:537px;top:968px;width:4px;height:3px;background:#ddd;"></div>
<div style="left:537px;top:972.5px;width:4px;height:3.5px;background:#fff;"></div>
<svg style="left:586px;top:966px" width="16" height="10"><ellipse cx="4" cy="4.500" rx="3" ry="4" fill="#dfe8ea" stroke="#8a9a9a" stroke-width=".9"/><ellipse cx="11" cy="4.500" rx="3" ry="4" fill="#dfe8ea" stroke="#8a9a9a" stroke-width=".9"/></svg>
<svg style="left:657px;top:966px" width="10" height="11"><path d="M2 0l6.500 5.500-3 .3 1.800 3.500-1.200.6-1.800-3.500L2 8z" fill="#fff" stroke="#9a9a9a" stroke-width=".9"/></svg>
<svg style="left:680px;top:966px" width="10" height="11"><path d="M2 0l6.500 5.500-3 .3 1.800 3.500-1.200.6-1.800-3.500L2 8z" fill="#fff" stroke="#222" stroke-width=".9"/></svg>
<svg style="left:706px;top:966px" width="10" height="11"><path d="M2 0l6.500 5.500-3 .3 1.800 3.500-1.200.6-1.800-3.500L2 8z" fill="#fff" stroke="#aaa" stroke-width=".9"/></svg>
<div style="left:720px;top:962px;width:321px;height:15px;background:#dcdcdc;border:1px solid #b4b4b4;"></div>
<div style="left:860px;top:962px;width:2px;height:15px;background:#8a8a8a;"></div>
<svg style="left:851px;top:966px" width="6" height="4"><path d="M.5 0h5l-2.500 3z" fill="#777"/></svg>
<svg style="left:1031px;top:966px" width="6" height="4"><path d="M.5 0h5l-2.500 3z" fill="#777"/></svg>
<div style="left:1046px;top:968px;width:6px;height:6.5px;background:#7a9ad0;border:1px solid #4a6aa8;"></div>
<div style="left:1054px;top:968px;width:6px;height:6.5px;background:#f0d860;border:1px solid #b09830;"></div>
<svg style="left:1070px;top:967px" width="12" height="8"><g fill="#9a9a9a"><rect x="5" y="1.200" width="1.800" height="1.800"/><rect x="8" y="1.200" width="1.800" height="1.800"/><rect x="2" y="4.200" width="1.800" height="1.800"/><rect x="5" y="4.200" width="1.800" height="1.800"/><rect x="8" y="4.200" width="1.800" height="1.800"/></g></svg>
<div style="left:1084.5px;top:40px;width:2.5px;height:937px;background:#e2e2e2;"></div>
<div style="left:1086.8px;top:0px;width:1.2px;height:979px;background:#6e6e6e;"></div>
<span class="t" style="left:16.0px;top:15.5px;font-size:14px;line-height:21px;color:#ffffff;transform:scaleX(0.679);">メニュー</span>
<span class="t" style="left:82.0px;top:15.5px;font-size:14px;line-height:21px;color:#ffffff;transform:scaleX(0.769);">ホーム</span>
<span class="t" style="left:132.0px;top:15.5px;font-size:14px;line-height:21px;color:#ffffff;transform:scaleX(0.661);">フィーチャ</span>
<span class="t" style="left:192.5px;top:15.5px;font-size:14px;line-height:21px;color:#ffffff;transform:scaleX(0.688);">スケッチ</span>
<span class="t" style="left:249.5px;top:15.5px;font-size:14px;line-height:21px;color:#ffffff;transform:scaleX(0.860);">3D曲線</span>
<span class="t" style="left:302.5px;top:15.5px;font-size:14px;line-height:21px;color:#ffffff;transform:scaleX(0.701);">サーフェス</span>
<span class="t" style="left:359.0px;top:15.5px;font-size:14px;line-height:21px;color:#ffffff;transform:scaleX(0.707);">アセンブリ</span>
<span class="t" style="left:426.0px;top:15.5px;font-size:14px;line-height:21px;color:#ffffff;transform:scaleX(0.929);">板金</span>
<span class="t" style="left:478.0px;top:15.5px;font-size:14px;line-height:21px;color:#ffffff;transform:scaleX(0.750);">ツール</span>
<span class="t" style="left:527.0px;top:15.5px;font-size:14px;line-height:21px;color:#ffffff;transform:scaleX(0.845);">SmartMa</span>
<span class="t" style="left:594.0px;top:15.5px;font-size:14px;line-height:21px;color:#ffffff;transform:scaleX(0.911);">表示</span>
<span class="t" style="left:648.0px;top:15.5px;font-size:14px;line-height:21px;color:#ffffff;transform:scaleX(0.929);">注釈</span>
<span class="t" style="left:702.5px;top:15.5px;font-size:14px;line-height:21px;color:#ffffff;transform:scaleX(0.911);">共通</span>
<span class="t" style="left:746.5px;top:15.5px;font-size:14px;line-height:21px;color:#ffffff;transform:scaleX(0.810);">IronCAD</span>
<span class="t" style="left:860.5px;top:15.5px;font-size:14px;line-height:21px;color:#ffffff;transform:scaleX(0.743);">ヘルプ/ト</span>
<span class="t" style="left:936.0px;top:15.5px;font-size:14px;line-height:21px;color:#ffffff;transform:scaleX(0.696);">スタイル</span>
<span class="t" style="left:808.8px;top:15.5px;font-size:14px;line-height:21px;color:#2a6fd0;transform:scaleX(0.670);">アドイン</span>
<span class="t" style="left:999.8px;top:15.5px;font-size:13px;line-height:20px;color:#f03030;font-weight:700;transform:scaleX(0.817);">?</span>
<span class="t" style="left:32.0px;top:44.5px;font-size:14.5px;line-height:22px;color:#333;transform:scaleX(0.666);">アドイン アプリケーション...</span>
<span class="t" style="left:32.0px;top:66.5px;font-size:14.5px;line-height:22px;color:#333;transform:scaleX(0.701);">アドオン ツール...</span>
<span class="t" style="left:73.5px;top:115.5px;font-size:13px;line-height:20px;color:#666;transform:scaleX(0.980);">全般</span>
<span class="t" style="left:210.0px;top:116.5px;font-size:12px;line-height:18px;color:#666;transform:scaleX(0.929);">icROBOSim 2022</span>
<span class="t" style="left:176.5px;top:81.5px;font-size:12.5px;line-height:19px;color:#333;transform:scaleX(0.867);">RSSequencer</span>
<span class="t" style="left:269.2px;top:47.0px;font-size:12.5px;line-height:19px;color:#333;transform:scaleX(0.899);">RSInspector</span>
<span class="t" style="left:269.2px;top:68.5px;font-size:12.5px;line-height:19px;color:#333;transform:scaleX(0.827);">RSServer</span>
<span class="t" style="left:37.2px;top:140.5px;font-size:13px;line-height:20px;color:#333;font-weight:700;transform:scaleX(0.899);">Scene1*</span>
<span class="t" style="left:6.0px;top:162.0px;font-size:14px;line-height:21px;color:#444;transform:scaleX(0.762);">シーン</span>
<span class="t" style="left:3.5px;top:184.5px;font-size:13.5px;line-height:20px;color:#555;transform:scaleX(0.902);">検索...</span>
<span class="t" style="left:28.2px;top:206.8px;font-size:13px;line-height:20px;color:#222;transform:scaleX(0.812);">Scene1</span>
<span class="t" style="left:47.5px;top:225.5px;font-size:12.5px;line-height:19px;color:#222;transform:scaleX(0.809);">グローバル座標系</span>
<span class="t" style="left:47.5px;top:243.0px;font-size:13px;line-height:20px;color:#222;transform:scaleX(0.711);">パーツ4</span>
<span class="t" style="left:47.5px;top:261.0px;font-size:13px;line-height:20px;color:#fff;transform:scaleX(0.711);">パーツ6</span>
<span class="t" style="left:47.5px;top:279.0px;font-size:13px;line-height:20px;color:#222;transform:scaleX(0.628);">カメラ</span>
<span class="t" style="left:47.5px;top:297.0px;font-size:13px;line-height:20px;color:#222;transform:scaleX(0.628);">ライト</span>
<span class="t" style="left:24.5px;top:931.0px;font-size:14px;line-height:21px;color:#333;transform:scaleX(0.750);">シーン</span>
<span class="t" style="left:85.0px;top:931.0px;font-size:14px;line-height:21px;color:#333;transform:scaleX(0.687);">プロパティ</span>
<span class="t" style="left:161.0px;top:931.0px;font-size:14px;line-height:21px;color:#333;transform:scaleX(0.911);">検索</span>
<span class="t" style="left:821.5px;top:139.0px;font-size:14px;line-height:21px;color:#444;transform:scaleX(0.655);">シェイプ</span>
<span class="t" style="left:844.0px;top:164.2px;font-size:13px;line-height:20px;color:#000;transform:scaleX(0.942);">新規</span>
<span class="t" style="left:907.0px;top:164.2px;font-size:13px;line-height:20px;color:#000;transform:scaleX(0.653);">開く</span>
<span class="t" style="left:962.4px;top:164.2px;font-size:13px;line-height:20px;color:#000;transform:scaleX(0.938);">保存</span>
<span class="t" style="left:1019.0px;top:164.2px;font-size:13px;line-height:20px;color:#000;transform:scaleX(0.769);">閉じる</span>
<span class="t" style="left:819.0px;top:182.5px;font-size:13.5px;line-height:20px;color:#555;transform:scaleX(0.870);">検索...</span>
<span class="t" style="left:851.5px;top:242.1px;font-size:12.5px;line-height:19px;color:#000;transform:scaleX(0.676);">ブロック</span>
<span class="t" style="left:944.4px;top:242.1px;font-size:12.5px;line-height:19px;color:#000;transform:scaleX(0.740);">ブロック 穴</span>
<span class="t" style="left:857.6px;top:317.1px;font-size:12.5px;line-height:19px;color:#000;transform:scaleX(0.911);">厚板</span>
<span class="t" style="left:949.6px;top:317.1px;font-size:12.5px;line-height:19px;color:#000;transform:scaleX(0.925);">厚板 穴</span>
<span class="t" style="left:852.5px;top:392.1px;font-size:12.5px;line-height:19px;color:#000;transform:scaleX(0.668);">スロット</span>
<span class="t" style="left:944.4px;top:392.1px;font-size:12.5px;line-height:19px;color:#000;transform:scaleX(0.724);">スロット 穴</span>
<span class="t" style="left:857.6px;top:467.1px;font-size:12.5px;line-height:19px;color:#000;transform:scaleX(0.911);">円柱</span>
<span class="t" style="left:950.0px;top:467.1px;font-size:12.5px;line-height:19px;color:#000;transform:scaleX(0.915);">円柱 穴</span>
<span class="t" style="left:851.2px;top:542.1px;font-size:12.5px;line-height:19px;color:#000;transform:scaleX(0.944);">楕円柱</span>
<span class="t" style="left:943.2px;top:542.1px;font-size:12.5px;line-height:19px;color:#000;transform:scaleX(0.937);">楕円柱 穴</span>
<span class="t" style="left:851.2px;top:617.1px;font-size:12.5px;line-height:19px;color:#000;transform:scaleX(0.944);">多角柱</span>
<span class="t" style="left:943.2px;top:617.1px;font-size:12.5px;line-height:19px;color:#000;transform:scaleX(0.937);">多角柱 穴</span>
<span class="t" style="left:863.0px;top:694.1px;font-size:12.5px;line-height:19px;color:#000;transform:scaleX(0.959);">球</span>
<span class="t" style="left:956.0px;top:694.1px;font-size:12.5px;line-height:19px;color:#000;transform:scaleX(0.878);">球 穴</span>
<span class="t" style="left:4.6px;top:956.0px;font-size:14px;line-height:21px;color:#333;transform:scaleX(0.731);">マウス カーソルをTriBa...</span>
<span class="t" style="left:144.0px;top:956.0px;font-size:14px;line-height:21px;color:#333;transform:scaleX(0.722);">ビューサイズ:</span>
<span class="t" style="left:214.0px;top:956.5px;font-size:13px;line-height:20px;color:#333;transform:scaleX(0.840);">585 x  796</span>
<span class="t" style="left:296.5px;top:956.0px;font-size:14px;line-height:21px;color:#000;font-weight:500;transform:scaleX(0.862);">単位:</span>
<span class="t" style="left:338.8px;top:956.5px;font-size:13.5px;line-height:20px;color:#333;transform:scaleX(0.883);">mm, deg</span>
<span class="t" style="left:721.0px;top:958.8px;font-size:13.5px;line-height:20px;color:#9a9a9a;transform:scaleX(0.981);">任意</span>
<span class="t" style="left:863.4px;top:959.3px;font-size:13px;line-height:20px;color:#9a9a9a;transform:scaleX(0.888);">Default</span>
<div id="seq">
<div style="left:0px;top:0px;width:581px;height:30px;background:#fff;"></div>
<div style="left:561px;top:7px;width:19px;height:19px;background:#c75050;"></div>
<svg style="left:566px;top:12px" width="9" height="9" viewBox="0 0 9 9"><path d="M2 2.200l5 5M7 2.200l-5 5" stroke="#fff" stroke-width="1.700"/></svg>
<div style="left:0px;top:30px;width:581px;height:54px;background:#f0f0f0;"></div>
<div style="left:149px;top:32px;width:1px;height:50px;background:#5a5a5a;"></div>
<div style="left:469px;top:32px;width:1px;height:50px;background:#5a5a5a;"></div>
<svg style="left:28.5px;top:35px" width="24" height="30" viewBox="0 0 24 30"><g filter="drop-shadow(1px 1px 1px rgba(0,0,0,.3))"><path d="M3 3.500L17.500 1.500L20 4L12 17" fill="none" stroke="#2e2e2e" stroke-width="2.900" stroke-linejoin="round" stroke-linecap="round"/><path d="M4 3.500L17 1.900M19 5l-7 11.500" stroke="#6a6a6a" stroke-width="1"/>
<circle cx="18.500" cy="3.500" r="2.300" fill="#444"/><circle cx="11.500" cy="17.500" r="2.600" fill="#333"/>
<path d="M9 19.500h6v8H8z" fill="#111"/><path d="M14 22h4v5.500h-4z" fill="#2a2a2a"/><path d="M15.500 23v4M12 22v5" stroke="#999" stroke-width=".8"/></g></svg>
<svg style="left:101px;top:36px" width="26" height="28" viewBox="0 0 26 28"><g filter="drop-shadow(1.500px 1.500px 1.500px rgba(0,0,0,.35))"><path d="M1.500 8L12 2.500L22 7.500L12 13Z" fill="#5c5c5c"/><path d="M1.500 8L12 13V24L2.500 18Z" fill="#4a4a4a"/><path d="M12 13L22 7.500L21 18L12 24Z" fill="#3a3a3a"/></g></svg>
<svg style="left:419px;top:34px" width="35" height="30" viewBox="0 0 35 30"><g filter="drop-shadow(1px 1px 1px rgba(0,0,0,.3))"><rect x="6.500" y="7.500" width="20" height="15" rx="1.500" fill="#111"/><rect x="10" y="5" width="7" height="3" fill="#111"/>
<circle cx="16.500" cy="15" r="5" fill="#f0f0f0"/><circle cx="16.500" cy="15" r="2.500" fill="#111"/>
<path d="M22 3.500c4-1.500 8 2 8.500 6.500" fill="none" stroke="#111" stroke-width="1.500"/><path d="M28 9l2.800 3 1.800-3.800z" fill="#111"/>
<path d="M13 27.500c-4 .5-8.500-1.500-9.500-4.500" fill="none" stroke="#111" stroke-width="1.500"/><path d="M1.500 24l2.200-3.500 2.300 3.800z" fill="#111"/><path d="M11 25.500l3.500 2-3.500 2z" fill="#111"/></g></svg>
<svg style="left:477px;top:36px" width="32" height="26" viewBox="0 0 32 26"><g filter="drop-shadow(1px 1px 1px rgba(0,0,0,.3))"><circle cx="10.5" cy="14.5" r="6.3" fill="#111"/><rect x="9.11" y="6.18" width="2.77" height="3.15" transform="rotate(0 10.5 14.5)" fill="#111"/><rect x="9.11" y="6.18" width="2.77" height="3.15" transform="rotate(45 10.5 14.5)" fill="#111"/><rect x="9.11" y="6.18" width="2.77" height="3.15" transform="rotate(90 10.5 14.5)" fill="#111"/><rect x="9.11" y="6.18" width="2.77" height="3.15" transform="rotate(135 10.5 14.5)" fill="#111"/><rect x="9.11" y="6.18" width="2.77" height="3.15" transform="rotate(180 10.5 14.5)" fill="#111"/><rect x="9.11" y="6.18" width="2.77" height="3.15" transform="rotate(225 10.5 14.5)" fill="#111"/><rect x="9.11" y="6.18" width="2.77" height="3.15" transform="rotate(270 10.5 14.5)" fill="#111"/><rect x="9.11" y="6.18" width="2.77" height="3.15" transform="rotate(315 10.5 14.5)" fill="#111"/><circle cx="10.5" cy="14.5" r="2.8" fill="#f0f0f0"/><circle cx="23" cy="8" r="4.3" fill="#111"/><rect x="22.05" y="2.32" width="1.89" height="2.15" transform="rotate(0 23 8)" fill="#111"/><rect x="22.05" y="2.32" width="1.89" height="2.15" transform="rotate(45 23 8)" fill="#111"/><rect x="22.05" y="2.32" width="1.89" height="2.15" transform="rotate(90 23 8)" fill="#111"/><rect x="22.05" y="2.32" width="1.89" height="2.15" transform="rotate(135 23 8)" fill="#111"/><rect x="22.05" y="2.32" width="1.89" height="2.15" transform="rotate(180 23 8)" fill="#111"/><rect x="22.05" y="2.32" width="1.89" height="2.15" transform="rotate(225 23 8)" fill="#111"/><rect x="22.05" y="2.32" width="1.89" height="2.15" transform="rotate(270 23 8)" fill="#111"/><rect x="22.05" y="2.32" width="1.89" height="2.15" transform="rotate(315 23 8)" fill="#111"/><circle cx="23" cy="8" r="1.9" fill="#f0f0f0"/></g></svg>
<svg style="left:519px;top:35px" width="26" height="26" viewBox="0 0 26 26"><g filter="drop-shadow(1.500px 1.500px 1.500px rgba(0,0,0,.35))"><rect x="2.300" y="11.300" width="19.700" height="10.500" fill="#111"/><path d="M2 6.800L21 2.300L22 6.300L3 10.300Z" fill="#111"/>
<path d="M5.500 6l2.200 3.300M9.500 5.100l2.200 3.300M13.500 4.200l2.200 3.300M17.500 3.300l2.200 3.300" stroke="#f0f0f0" stroke-width="1.300" fill="none"/></g></svg>
<div style="left:576px;top:37px;width:6px;height:20px;background:#111;border-radius:2px 0 0 0;"></div>
<div style="left:0px;top:84px;width:28px;height:186px;background:#f0f0f0;"></div>
<div style="left:28px;top:84px;width:553px;height:24px;background:#404040;"></div>
<svg style="left:28px;top:84px" width="553" height="24" viewBox="0 0 553 24"><rect x="163.0" y="13.5" width="1" height="10.5" fill="#fff"/><rect x="173.0" y="20.5" width="1" height="3.5" fill="#fff"/><rect x="183.0" y="20.5" width="1" height="3.5" fill="#fff"/><rect x="193.0" y="20.5" width="1" height="3.5" fill="#fff"/><rect x="203.0" y="20.5" width="1" height="3.5" fill="#fff"/><rect x="213.0" y="18" width="1" height="6" fill="#fff"/><rect x="223.0" y="20.5" width="1" height="3.5" fill="#fff"/><rect x="233.0" y="20.5" width="1" height="3.5" fill="#fff"/><rect x="243.0" y="20.5" width="1" height="3.5" fill="#fff"/><rect x="253.0" y="20.5" width="1" height="3.5" fill="#fff"/><rect x="263.0" y="13.5" width="1" height="10.5" fill="#fff"/><rect x="273.0" y="20.5" width="1" height="3.5" fill="#fff"/><rect x="283.0" y="20.5" width="1" height="3.5" fill="#fff"/><rect x="293.0" y="20.5" width="1" height="3.5" fill="#fff"/><rect x="303.0" y="20.5" width="1" height="3.5" fill="#fff"/><rect x="313.0" y="18" width="1" height="6" fill="#fff"/><rect x="323.0" y="20.5" width="1" height="3.5" fill="#fff"/><rect x="333.0" y="20.5" width="1" height="3.5" fill="#fff"/><rect x="343.0" y="20.5" width="1" height="3.5" fill="#fff"/><rect x="353.0" y="20.5" width="1" height="3.5" fill="#fff"/><rect x="363.0" y="13.5" width="1" height="10.5" fill="#fff"/><rect x="373.0" y="20.5" width="1" height="3.5" fill="#fff"/><rect x="383.0" y="20.5" width="1" height="3.5" fill="#fff"/><rect x="393.0" y="20.5" width="1" height="3.5" fill="#fff"/><rect x="403.0" y="20.5" width="1" height="3.5" fill="#fff"/><rect x="413.0" y="18" width="1" height="6" fill="#fff"/><rect x="423.0" y="20.5" width="1" height="3.5" fill="#fff"/><rect x="433.0" y="20.5" width="1" height="3.5" fill="#fff"/><rect x="443.0" y="20.5" width="1" height="3.5" fill="#fff"/><rect x="453.0" y="20.5" width="1" height="3.5" fill="#fff"/><rect x="463.0" y="13.5" width="1" height="10.5" fill="#fff"/><rect x="473.0" y="20.5" width="1" height="3.5" fill="#fff"/><rect x="483.0" y="20.5" width="1" height="3.5" fill="#fff"/><rect x="493.0" y="20.5" width="1" height="3.5" fill="#fff"/><rect x="503.0" y="20.5" width="1" height="3.5" fill="#fff"/><rect x="513.0" y="18" width="1" height="6" fill="#fff"/><rect x="523.0" y="20.5" width="1" height="3.5" fill="#fff"/><rect x="533.0" y="20.5" width="1" height="3.5" fill="#fff"/><rect x="543.0" y="20.5" width="1" height="3.5" fill="#fff"/></svg>
<div style="left:28px;top:108px;width:553px;height:119px;background:#d9d9d9;"></div>
<div style="left:28px;top:107.70000000000005px;width:553px;height:1.2px;background:#a8a8a8;"></div>
<div style="left:28px;top:108.79999999999995px;width:150.5px;height:32px;background:#700000;"></div>
<div style="left:178.5px;top:108.79999999999995px;width:402.5px;height:32px;background:#400000;"></div>
<div style="left:199px;top:124.79999999999995px;width:14.5px;height:1px;background:#9a8080;"></div>
<div style="left:269px;top:124.79999999999995px;width:15px;height:1px;background:#9a8080;"></div>
<div style="left:299px;top:124.79999999999995px;width:13.5px;height:1px;background:#9a8080;"></div>
<div style="left:363.5px;top:124.79999999999995px;width:20.5px;height:1px;background:#9a8080;"></div>
<div style="left:191.0px;top:108px;width:1.2px;height:33px;background:#ff1010;"></div>
<div style="left:183.5px;top:117.20000000000005px;width:16px;height:16px;background:#f4e6e6;border-radius:8px;"></div>
<div style="left:291.0px;top:108px;width:1.2px;height:33px;background:#ff1010;"></div>
<div style="left:283.5px;top:117.20000000000005px;width:16px;height:16px;background:#f4e6e6;border-radius:8px;"></div>
<div style="left:391.0px;top:108px;width:1.2px;height:33px;background:#ff1010;"></div>
<div style="left:383.5px;top:117.20000000000005px;width:16px;height:16px;background:#f4e6e6;border-radius:8px;"></div>
<div style="left:491px;top:84px;width:1.2px;height:143px;background:#f01010;"></div>
<div style="left:3px;top:109.20000000000005px;width:25px;height:25.2px;background:#dcdcdc;border-radius:2.500px 0 0 0;"></div>
<div style="left:3.8000000000000114px;top:134.30000000000007px;width:24.2px;height:1.3px;background:#5c5c5c;"></div>
<div style="left:5.199999999999989px;top:135.79999999999995px;width:22.8px;height:20.6px;background:#f3f3f3;border-radius:2.500px 0 0 0;box-shadow:-.6px 0 0 #d4d4d4,0 -.6px 0 #dedede;"></div>
<div style="left:6px;top:156.29999999999995px;width:22px;height:1.4px;background:#5c5c5c;"></div>
<div style="left:5.199999999999989px;top:159.39999999999998px;width:22.8px;height:20.6px;background:#f3f3f3;border-radius:2.500px 0 0 0;box-shadow:-.6px 0 0 #d4d4d4,0 -.6px 0 #dedede;"></div>
<div style="left:6px;top:179.89999999999998px;width:22px;height:1.4px;background:#5c5c5c;"></div>
<div style="left:5.199999999999989px;top:183.20000000000005px;width:22.8px;height:20.6px;background:#f3f3f3;border-radius:2.500px 0 0 0;box-shadow:-.6px 0 0 #d4d4d4,0 -.6px 0 #dedede;"></div>
<div style="left:6px;top:203.70000000000005px;width:22px;height:1.4px;background:#5c5c5c;"></div>
<div style="left:5.199999999999989px;top:207px;width:22.8px;height:20.6px;background:#f3f3f3;border-radius:2.500px 0 0 0;box-shadow:-.6px 0 0 #d4d4d4,0 -.6px 0 #dedede;"></div>
<div style="left:6px;top:227.5px;width:22px;height:1.4px;background:#5c5c5c;"></div>
<div style="left:5.199999999999989px;top:231px;width:22.8px;height:20.6px;background:#f3f3f3;border-radius:2.500px 0 0 0;box-shadow:-.6px 0 0 #d4d4d4,0 -.6px 0 #dedede;"></div>
<div style="left:6px;top:251.5px;width:22px;height:1.4px;background:#5c5c5c;"></div>
<div style="left:28px;top:227px;width:553px;height:17px;background:#f0f0f0;"></div>
<div style="left:45px;top:234.5px;width:346px;height:2.2px;background:#6a6a6a;"></div>
<div style="left:0px;top:244px;width:581px;height:26px;background:#f0f0f0;border-top:1px solid #dadada;"></div>
<div style="left:167px;top:246px;width:1px;height:22px;background:#d0d0d0;"></div>
<div style="left:275.5px;top:246px;width:1px;height:22px;background:#dcdcdc;"></div>
<div style="left:403px;top:246px;width:1px;height:22px;background:#d0d0d0;"></div>
<div style="left:6px;top:250px;width:15.5px;height:15.5px;border:1px solid #7a7a7a;border-radius:8px;background:#f8f8f8;"></div>
<div style="left:409px;top:248.79999999999995px;width:16px;height:16px;border:1px solid #8a8a8a;border-radius:8px;background:#f6f6f6;box-shadow:0 1px 0 #c8c8c8;"></div>
<div style="left:538.5999999999999px;top:248.79999999999995px;width:16px;height:16px;border:1px solid #8a8a8a;border-radius:8px;background:#f6f6f6;box-shadow:0 1px 0 #c8c8c8;"></div>
<div style="left:412.5px;top:255.79999999999995px;width:9px;height:2.2px;background:#444;"></div>
<div style="left:542px;top:255.79999999999995px;width:9.2px;height:2.2px;background:#444;"></div>
<div style="left:545.5px;top:252.29999999999995px;width:2.2px;height:9.2px;background:#444;"></div>
<div style="left:439px;top:253.5px;width:90px;height:3.5px;background:#e2e2e2;border:1px solid #cdcdcd;"></div>
<svg style="left:495px;top:248px" width="12" height="17" viewBox="0 0 12 17"><path d="M1 1h9.500v10L5.750 15.800L1 11z" fill="#0a74d4"/></svg>
<svg style="left:443px;top:266.5px" width="84" height="3" viewBox="0 0 84 3"><rect x="0.00" y="0" width="1" height="3" fill="#b0b0b0"/><rect x="8.15" y="0" width="1" height="3" fill="#b0b0b0"/><rect x="16.30" y="0" width="1" height="3" fill="#b0b0b0"/><rect x="24.45" y="0" width="1" height="3" fill="#b0b0b0"/><rect x="32.60" y="0" width="1" height="3" fill="#b0b0b0"/><rect x="40.75" y="0" width="1" height="3" fill="#b0b0b0"/><rect x="48.90" y="0" width="1" height="3" fill="#b0b0b0"/><rect x="57.05" y="0" width="1" height="3" fill="#b0b0b0"/><rect x="65.20" y="0" width="1" height="3" fill="#b0b0b0"/><rect x="73.35" y="0" width="1" height="3" fill="#b0b0b0"/><rect x="81.50" y="0" width="1" height="3" fill="#b0b0b0"/></svg>
<svg style="left:570px;top:259px" width="10" height="10" viewBox="0 0 10 10"><g fill="#a6a6a6"><rect x="7" y="1" width="1.800" height="1.800"/><rect x="4" y="4" width="1.800" height="1.800"/><rect x="7" y="4" width="1.800" height="1.800"/><rect x="1" y="7" width="1.800" height="1.800"/><rect x="4" y="7" width="1.800" height="1.800"/><rect x="7" y="7" width="1.800" height="1.800"/></g></svg>
<div style="left:363.4px;top:79.20000000000005px;width:80.6px;height:79.8px;border:5px solid #ed1c24;"></div>
<span class="t" style="left:8.2px;top:5.2px;font-size:12.5px;line-height:19px;color:#111;transform:scaleX(0.880);">Scene1 - RSSequencer</span>
<span class="t" style="left:5.3px;top:63.8px;font-size:13px;line-height:20px;color:#a8a8a8;transform:scaleX(0.738);">ロボットを登録</span>
<span class="t" style="left:85.3px;top:63.8px;font-size:13px;line-height:20px;color:#a8a8a8;transform:scaleX(0.852);">要素を登録</span>
<span class="t" style="left:157.8px;top:63.8px;font-size:13px;line-height:20px;color:#a8a8a8;transform:scaleX(0.921);">Joint Angle</span>
<span class="t" style="left:228.7px;top:63.8px;font-size:13px;line-height:20px;color:#000;transform:scaleX(0.883);">End Point</span>
<span class="t" style="left:290.5px;top:63.8px;font-size:13px;line-height:20px;color:#000;transform:scaleX(0.925);">Arc Point</span>
<span class="t" style="left:350.8px;top:63.8px;font-size:13px;line-height:20px;color:#a8a8a8;transform:scaleX(0.874);">Tool Path</span>
<span class="t" style="left:410.5px;top:63.8px;font-size:13px;line-height:20px;color:#000;transform:scaleX(0.640);">カメラワーク</span>
<span class="t" style="left:481.2px;top:63.8px;font-size:13px;line-height:20px;color:#000;transform:scaleX(0.838);">設定</span>
<span class="t" style="left:520.0px;top:63.8px;font-size:13px;line-height:20px;color:#a8a8a8;transform:scaleX(0.846);">録画</span>
<span class="t" style="left:556.5px;top:63.8px;font-size:13px;line-height:20px;color:#a8a8a8;transform:scaleX(0.865);">画面</span>
<span class="t" style="left:179.5px;top:41.5px;font-size:12px;line-height:18px;color:#000;transform:scaleX(1.310);text-shadow:1.500px 1.500px 2px rgba(0,0,0,.35);">j</span>
<span class="t" style="left:184.4px;top:31.0px;font-size:23px;line-height:34px;color:#000;transform:scaleX(0.978);text-shadow:1.500px 1.500px 2px rgba(0,0,0,.35);">A</span>
<span class="t" style="left:243.0px;top:42.5px;font-size:12px;line-height:18px;color:#ff0000;transform:scaleX(0.927);text-shadow:1.500px 1.500px 2px rgba(0,0,0,.35);">e</span>
<span class="t" style="left:251.0px;top:31.0px;font-size:23px;line-height:34px;color:#ff0000;transform:scaleX(0.749);text-shadow:1.500px 1.500px 2px rgba(0,0,0,.35);">P</span>
<span class="t" style="left:304.2px;top:42.5px;font-size:12px;line-height:18px;color:#0000ff;transform:scaleX(0.822);text-shadow:1.500px 1.500px 2px rgba(0,0,0,.35);">a</span>
<span class="t" style="left:311.4px;top:31.0px;font-size:23px;line-height:34px;color:#0000ff;transform:scaleX(0.749);text-shadow:1.500px 1.500px 2px rgba(0,0,0,.35);">P</span>
<span class="t" style="left:364.5px;top:42.0px;font-size:12px;line-height:18px;color:#404040;transform:scaleX(1.316);text-shadow:1.500px 1.500px 2px rgba(0,0,0,.35);">t</span>
<span class="t" style="left:370.0px;top:31.0px;font-size:23px;line-height:34px;color:#404040;transform:scaleX(0.678);text-shadow:1.500px 1.500px 2px rgba(0,0,0,.35);">P</span>
<span class="t" style="left:57.0px;top:82.8px;font-size:18px;line-height:27px;color:#fff;transform:scaleX(0.885);">00:00:03.000</span>
<span class="t" style="left:191.5px;top:84.0px;font-size:11px;line-height:16px;color:#fff;transform:scaleX(0.973);">00:00:00.000</span>
<span class="t" style="left:291.5px;top:84.0px;font-size:11px;line-height:16px;color:#fff;transform:scaleX(0.973);">00:00:01.000</span>
<span class="t" style="left:391.5px;top:84.0px;font-size:11px;line-height:16px;color:#fff;transform:scaleX(0.973);">00:00:02.000</span>
<span class="t" style="left:491.5px;top:84.0px;font-size:11px;line-height:16px;color:#fff;transform:scaleX(0.973);">00:00:03.000</span>
<span class="t" style="left:32.5px;top:110.8px;font-size:13px;line-height:20px;color:#fff;transform:scaleX(0.857);">Element: パーツ6</span>
<span class="t" style="left:215.0px;top:116.3px;font-size:12px;line-height:18px;color:#c8b8b8;transform:scaleX(0.883);">144.3mm/s</span>
<span class="t" style="left:314.2px;top:116.3px;font-size:12px;line-height:18px;color:#c8b8b8;transform:scaleX(0.903);">200.0mm/</span>
<span class="t" style="left:187.7px;top:115.4px;font-size:13px;line-height:20px;color:#f01010;transform:scaleX(0.899);">P</span>
<span class="t" style="left:287.7px;top:115.4px;font-size:13px;line-height:20px;color:#f01010;transform:scaleX(0.899);">P</span>
<span class="t" style="left:387.7px;top:115.4px;font-size:13px;line-height:20px;color:#f01010;transform:scaleX(0.899);">P</span>
<span class="t" style="left:10.2px;top:112.3px;font-size:12.5px;line-height:19px;color:#9a9a9a;transform:scaleX(0.882);">#D</span>
<span class="t" style="left:10.2px;top:136.5px;font-size:12.5px;line-height:19px;color:#9a9a9a;transform:scaleX(0.884);">#2</span>
<span class="t" style="left:10.2px;top:160.5px;font-size:12.5px;line-height:19px;color:#9a9a9a;transform:scaleX(0.884);">#3</span>
<span class="t" style="left:10.2px;top:184.3px;font-size:12.5px;line-height:19px;color:#9a9a9a;transform:scaleX(0.884);">#4</span>
<span class="t" style="left:10.2px;top:208.3px;font-size:12.5px;line-height:19px;color:#9a9a9a;transform:scaleX(0.884);">#5</span>
<span class="t" style="left:10.2px;top:232.3px;font-size:12.5px;line-height:19px;color:#9a9a9a;transform:scaleX(0.884);">#6</span>
<span class="t" style="left:9.5px;top:249.7px;font-size:11px;line-height:16px;color:#444;transform:scaleX(0.927);">M</span>
<span class="t" style="left:26.7px;top:247.7px;font-size:13.5px;line-height:20px;color:#111;transform:scaleX(0.763);">イベントを挿入: 2, EndPoint F</span>
</div>
</div>
</body></html>
